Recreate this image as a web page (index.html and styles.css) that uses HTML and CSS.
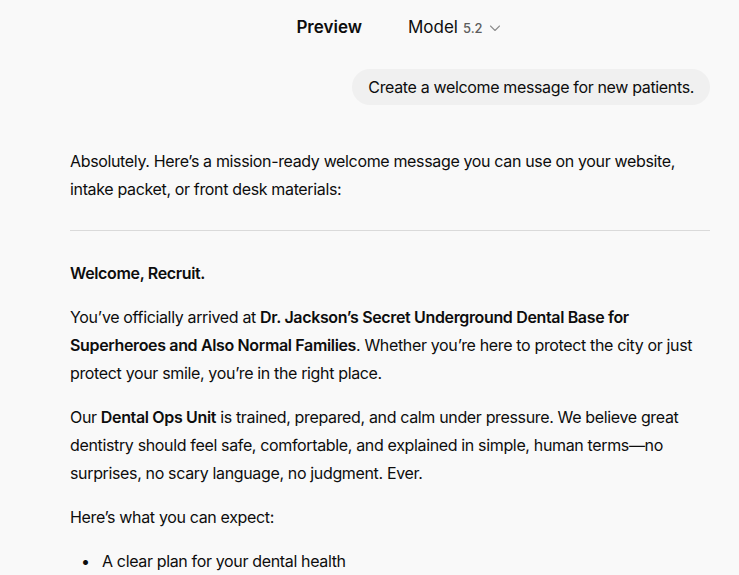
FILE: index.html
```html
<!DOCTYPE html>
<html lang="en">
<head>
<meta charset="utf-8">
<link rel="stylesheet" href="styles.css">
</head>
<body>
<header class="topbar">
  <span class="tab tab-active">Preview</span>
  <span class="tab model">Model <span class="ver">5.2</span>
    <svg class="chev" width="12" height="12" viewBox="0 0 12 12"><path d="M1.5 4 L6 8.5 L10.5 4" fill="none" stroke="#8f8f8f" stroke-width="1.1" stroke-linecap="round" stroke-linejoin="round"/></svg>
  </span>
</header>
<main class="thread">
  <div class="user-row">
    <div class="bubble">Create a welcome message for new patients.</div>
  </div>
  <article class="reply">
    <p>Absolutely. Here’s a mission-ready welcome message you can use on your website, intake packet, or front desk materials:</p>
    <hr class="rule">
    <p><strong>Welcome, Recruit.</strong></p>
    <p>You’ve officially arrived at <strong>Dr. Jackson’s Secret Underground Dental Base for Superheroes and Also Normal Families</strong>. Whether you’re here to protect the city or just protect your smile, you’re in the right place.</p>
    <p>Our <strong>Dental Ops Unit</strong> is trained, prepared, and calm under pressure. We believe great dentistry should feel safe, comfortable, and explained in simple, human terms—no surprises, no scary language, no judgment. Ever.</p>
    <p>Here’s what you can expect:</p>
    <ul class="list">
      <li>A clear plan for your dental health</li>
    </ul>
  </article>
</main>
</body>
</html>
```
FILE: styles.css
```css
html, body {
  margin: 0;
  padding: 0;
  background: #f9f9f9;
  height: 100%;
  overflow: hidden;
}
body {
  font-family: Inter, "Noto Sans", sans-serif;
  color: #0d0d0d;
  font-size: 16px;
  -webkit-font-smoothing: antialiased;
}
.topbar {
  height: 54px;
  display: flex;
  align-items: center;
  justify-content: center;
  gap: 46px;
  padding-left: 58px;
  box-sizing: border-box;
}
.tab {
  font-size: 17px;
  color: #0d0d0d;
  display: inline-flex;
  align-items: center;
}
.tab-active {
  font-weight: 600;
}
.model .ver {
  font-size: 13px;
  font-weight: 500;
  color: #5d5d5d;
  margin-left: 5px;
  margin-top: 1px;
}
.chev {
  margin-left: 6px;
  margin-top: 2px;
}
.thread {
  padding: 15px 29px 0 70px;
  letter-spacing: -0.35px;
}
.user-row {
  display: flex;
  justify-content: flex-end;
}
.bubble {
  background: #f0f0f0;
  border-radius: 18px;
  padding: 6px 16px;
  line-height: 24px;
  font-size: 16px;
}
.reply {
  margin-top: 42px;
  line-height: 28px;
  font-size: 16px;
}
.reply p {
  margin: 0 0 16px;
}
.reply strong {
  font-weight: 600;
}
.rule {
  border: 0;
  border-top: 1px solid #dadada;
  margin: 27px 0 28px;
}
.list {
  margin: 0;
  padding: 0;
  list-style: none;
}
.list li {
  display: flex;
}
.list li::before {
  content: "•";
  width: 21px;
  margin-left: 11px;
  flex: none;
}
```
